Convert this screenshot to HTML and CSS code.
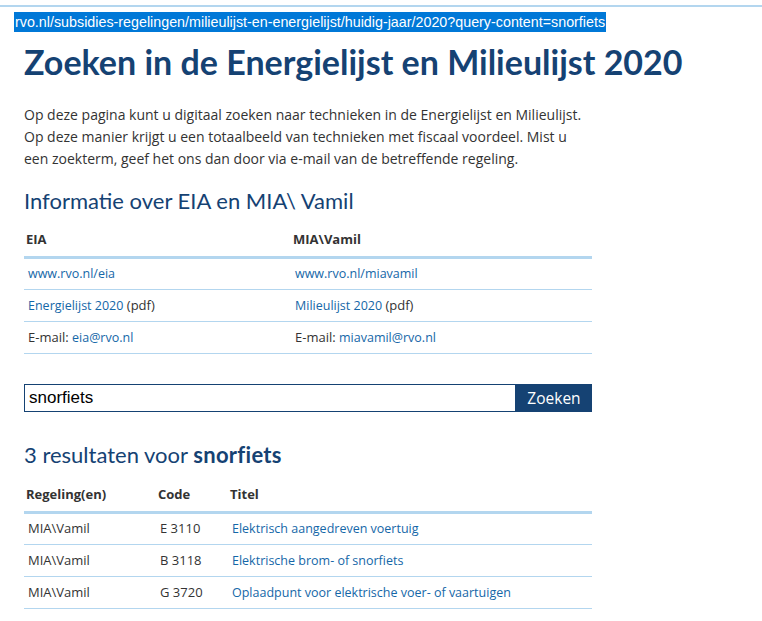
FILE: index.html
```html
<!DOCTYPE html>
<html lang="nl">
<head>
    <meta charset="UTF-8">
    <meta name="viewport" content="width=device-width, initial-scale=1.0">
    <title>Zoeken in de Energielijst en Milieulijst 2020</title>
    <link rel="stylesheet" href="styles.css">
</head>
<body>
    <div class="topbar"></div>
    <p class="url"><span class="selected">rvo.nl/subsidies-regelingen/milieulijst-en-energielijst/huidig-jaar/2020?query-content=snorfiets</span></p>

    <main class="content">
        <h1>Zoeken in de Energielijst en Milieulijst 2020</h1>

        <p class="intro">Op deze pagina kunt u digitaal zoeken naar technieken in de Energielijst en Milieulijst. Op deze manier krijgt u een totaalbeeld van technieken met fiscaal voordeel. Mist u een zoekterm, geef het ons dan door via e-mail van de betreffende regeling.</p>

        <h2>Informatie over EIA en MIA\ Vamil</h2>

        <table class="info-table">
            <thead>
                <tr>
                    <th class="col-eia">EIA</th>
                    <th>MIA\Vamil</th>
                </tr>
            </thead>
            <tbody>
                <tr>
                    <td><a href="#">www.rvo.nl/eia</a></td>
                    <td><a href="#">www.rvo.nl/miavamil</a></td>
                </tr>
                <tr>
                    <td><a href="#">Energielijst 2020</a> (pdf)</td>
                    <td><a href="#">Milieulijst 2020</a> (pdf)</td>
                </tr>
                <tr>
                    <td>E-mail: <a href="#">eia@rvo.nl</a></td>
                    <td>E-mail: <a href="#">miavamil@rvo.nl</a></td>
                </tr>
            </tbody>
        </table>

        <form class="search" id="searchForm">
            <input type="text" id="query" value="snorfiets">
            <button type="submit" class="search-btn">Zoeken</button>
        </form>

        <h2>3 resultaten voor <strong>snorfiets</strong></h2>

        <table class="results-table">
            <thead>
                <tr>
                    <th class="col-regeling">Regeling(en)</th>
                    <th class="col-code">Code</th>
                    <th>Titel</th>
                </tr>
            </thead>
            <tbody>
                <tr>
                    <td>MIA\Vamil</td>
                    <td>E 3110</td>
                    <td><a href="#">Elektrisch aangedreven voertuig</a></td>
                </tr>
                <tr>
                    <td>MIA\Vamil</td>
                    <td>B 3118</td>
                    <td><a href="#">Elektrische brom- of snorfiets</a></td>
                </tr>
                <tr>
                    <td>MIA\Vamil</td>
                    <td>G 3720</td>
                    <td><a href="#">Oplaadpunt voor elektrische voer- of vaartuigen</a></td>
                </tr>
            </tbody>
        </table>
    </main>
</body>
</html>
```

FILE: styles.css
```css
:root {
    --primary: #154273;
    --text: #333333;
    --link: #1567a8;
    --line: #b3d6ef;
    --selection: #0078d7;
}

* {
    margin: 0;
    padding: 0;
    box-sizing: border-box;
}

body {
    background: white;
    color: var(--text);
    font-family: 'Open Sans', 'Noto Sans', sans-serif;
    font-size: 14px;
}

.topbar {
    height: 2px;
    margin-top: 5px;
    background-color: var(--line);
}

.url {
    margin-top: 5px;
    padding-left: 14px;
    font-family: 'Liberation Sans', Arial, sans-serif;
    font-size: 14.3px;
    line-height: 20px;
}

.selected {
    display: inline-block;
    background-color: var(--selection);
    color: white;
    padding: 0 1px;
}

.content {
    width: 568px;
    margin-left: 24px;
}

h1 {
    margin-top: 8px;
    color: var(--primary);
    font-family: 'Lato', sans-serif;
    font-size: 34px;
    line-height: 44px;
    font-weight: 700;
    white-space: nowrap;
}

.intro {
    margin-top: 20px;
    line-height: 22px;
}

h2 {
    margin-top: 17px;
    color: var(--primary);
    font-family: 'Lato', sans-serif;
    font-size: 22px;
    line-height: 28px;
    font-weight: 400;
}

h2 strong {
    font-weight: 700;
    letter-spacing: 0.3px;
}

table {
    width: 100%;
    margin-top: 7px;
    border-collapse: collapse;
}

th {
    text-align: left;
    font-size: 13px;
    font-weight: 700;
    line-height: 18px;
    padding: 8px 2px;
    border-bottom: 3px solid var(--line);
}

td {
    height: 32px;
    font-size: 13px;
    line-height: 18px;
    padding: 0 4px 2px;
    vertical-align: middle;
    border-bottom: 1px solid var(--line);
}

a {
    color: var(--link);
    text-decoration: none;
    font-size: 12.5px;
    line-height: 16px;
}

.col-eia {
    width: 267px;
}

.search {
    display: flex;
    margin-top: 30px;
    height: 28px;
}

.search input {
    flex: 1;
    border: 1px solid var(--primary);
    padding: 0 4px;
    font-family: 'Liberation Sans', Arial, sans-serif;
    font-size: 17px;
    color: black;
}

.search-btn {
    width: 76px;
    border: none;
    background-color: var(--primary);
    color: white;
    font-family: inherit;
    font-size: 15.5px;
    cursor: pointer;
}

.search + h2 {
    margin-top: 29px;
}

.results-table {
    margin-top: 8px;
}

.col-regeling {
    width: 132px;
}

.col-code {
    width: 72px;
}
```
